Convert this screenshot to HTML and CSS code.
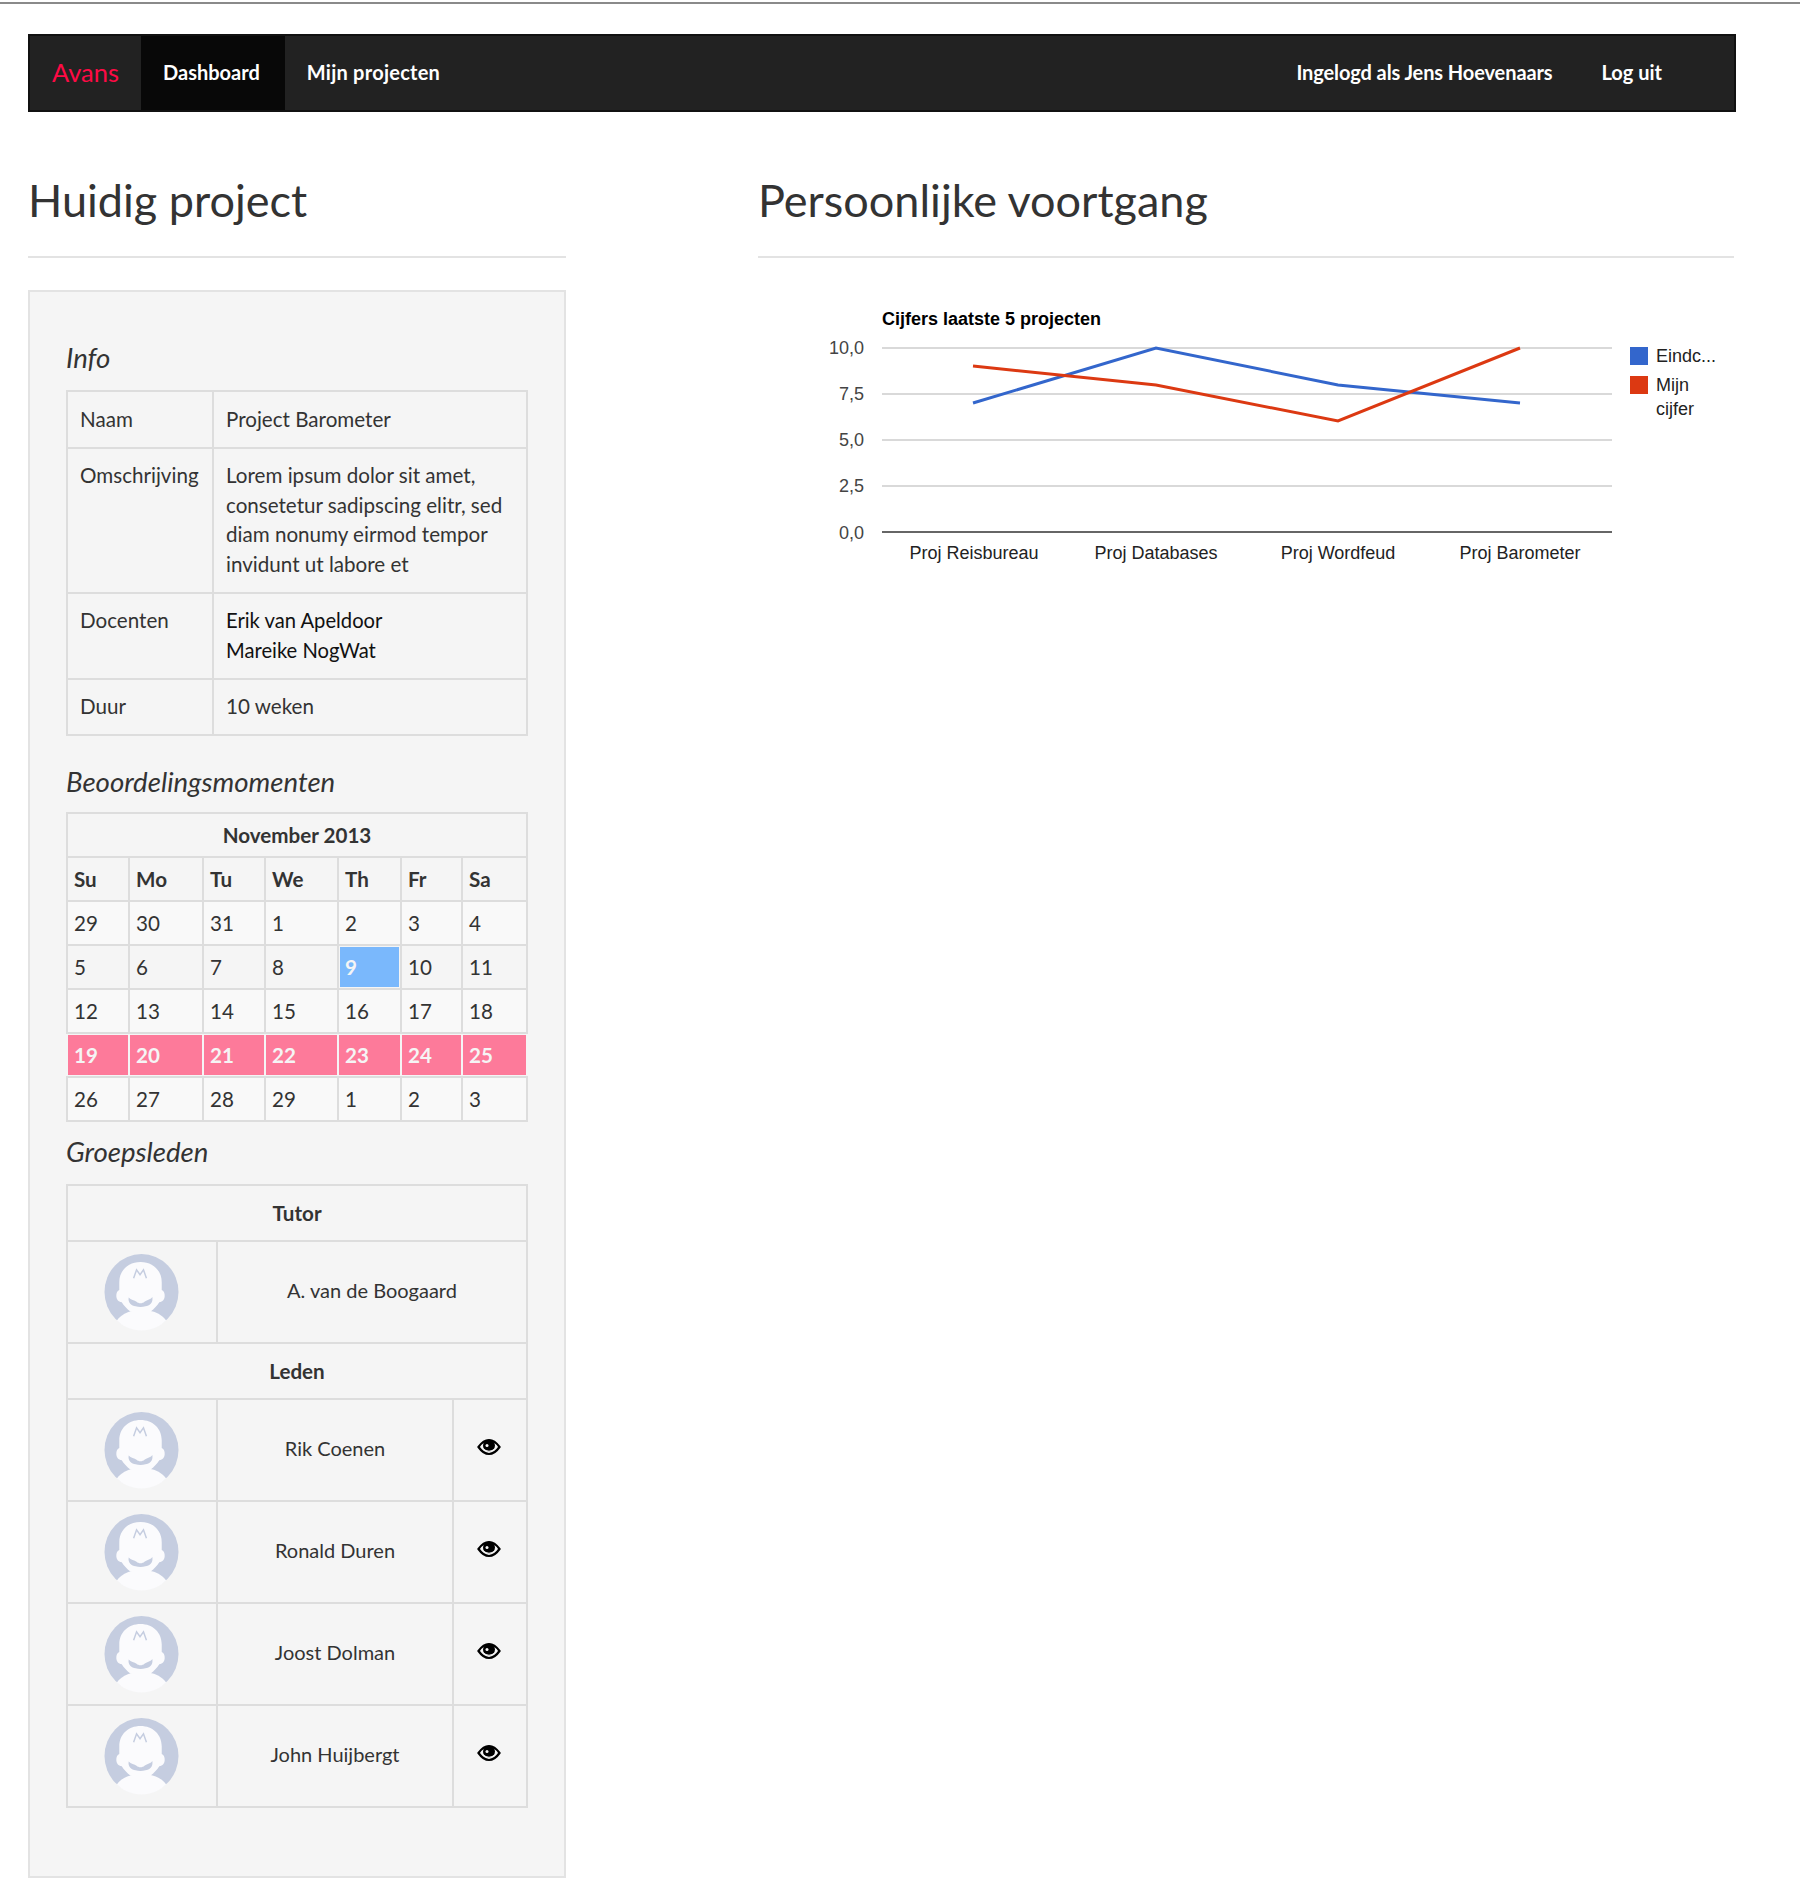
FILE: index.html
```html
<!DOCTYPE html>
<html lang="nl">
<head>
  <meta charset="UTF-8" />
  <title>Dashboard - Avans</title>
  <link rel="stylesheet" href="styles.css">
</head>
<body>
  <svg class="sprites" width="0" height="0">
    <symbol id="avatar" viewBox="0 0 76 78">
      <ellipse cx="38" cy="39" rx="37.500" ry="38.500" fill="#c5cde0"/>
      <path fill="#fbfbfd" d="M13 68C17 62 24 59 30 58H46C52 59 59 62 63 68C57 74 48 78 38 78C28 78 19 74 13 68Z"/>
      <path fill="#fbfbfd" d="M37 8.500C24.500 8.500 15.500 17 15.500 29V37C13 38 12.500 40.500 12.500 43C12.500 46 14.500 49 18 49.500C20 53 23 56 27 59H47C51 56 54 53 56 49.500C59.500 49 61.500 46 61.500 43C61.500 40.500 61 38 58.500 37V29C58.500 17 49.500 8.500 37 8.500Z"/>
      <path fill="#c5cde0" d="M25 44.500C27 47 31 47 33 49C35 51 39 51 41 49C43 47 47 47 49 44C50 50 46 53 42 53.500C39 54.500 35 54.500 32 53.500C28 53 24 50 25 44.500Z"/>
      <path fill="none" stroke="#c5cde0" stroke-width="1.500" d="M30 25L33 16.500L36.500 21.500L40 16.500L43 25"/>
    </symbol>
    <symbol id="eye" viewBox="0 0 24 18">
      <path fill="none" stroke="#000" stroke-width="2.200" d="M1.500 9C5 4 8.500 2 12 2s7 2 10.500 7C19 14 15.500 16 12 16S5 14 1.500 9z"/>
      <circle cx="12" cy="7.500" r="6" fill="#000"/>
      <circle cx="10" cy="7.500" r="1.500" fill="#f5f5f5"/>
      <path fill="none" stroke="#f5f5f5" stroke-width="1.200" d="M6 11c3 3 9 3 12 0"/>
    </symbol>
  </svg>

  <div class="page">
    <nav class="navbar">
      <a class="brand" href="#">Avans</a>
      <a class="nav-link active" href="#">Dashboard</a>
      <a class="nav-link nav-projects" href="#">Mijn projecten</a>
      <span class="nav-user">Ingelogd als Jens Hoevenaars</span>
      <a class="nav-link nav-logout" href="#">Log uit</a>
    </nav>

    <div class="columns">
      <section class="col-left">
        <h1 class="page-title">Huidig project</h1>
        <div class="well">
          <h2 class="sub-title">Info</h2>
          <table class="grid info-table">
            <tr><td class="info-key">Naam</td><td>Project Barometer</td></tr>
            <tr><td class="info-key">Omschrijving</td><td>Lorem ipsum dolor sit amet, consetetur sadipscing elitr, sed diam nonumy eirmod tempor invidunt ut labore et</td></tr>
            <tr><td class="info-key">Docenten</td><td class="names">Erik van Apeldoor<br>Mareike NogWat</td></tr>
            <tr><td class="info-key">Duur</td><td>10 weken</td></tr>
          </table>

          <h2 class="sub-title sub-title-cal">Beoordelingsmomenten</h2>
          <table class="grid calendar">
            <colgroup><col class="c1"><col class="c2"><col class="c3"><col class="c4"><col class="c5"><col class="c6"><col class="c7"></colgroup>
            <tr><th colspan="7" class="month">November 2013</th></tr>
            <tr><th>Su</th><th>Mo</th><th>Tu</th><th>We</th><th>Th</th><th>Fr</th><th>Sa</th></tr>
            <tr class="striped"><td>29</td><td>30</td><td>31</td><td>1</td><td>2</td><td>3</td><td>4</td></tr>
            <tr><td>5</td><td>6</td><td>7</td><td>8</td><td class="today">9</td><td>10</td><td>11</td></tr>
            <tr class="striped"><td>12</td><td>13</td><td>14</td><td>15</td><td>16</td><td>17</td><td>18</td></tr>
            <tr class="deadline"><td>19</td><td>20</td><td>21</td><td>22</td><td>23</td><td>24</td><td>25</td></tr>
            <tr class="striped"><td>26</td><td>27</td><td>28</td><td>29</td><td>1</td><td>2</td><td>3</td></tr>
          </table>

          <h2 class="sub-title sub-title-group">Groepsleden</h2>
          <table class="grid members">
            <colgroup><col class="m-avatar"><col class="m-name"><col class="m-eye"></colgroup>
            <tr><th colspan="3">Tutor</th></tr>
            <tr>
              <td class="avatar-cell"><svg class="avatar"><use href="#avatar"/></svg></td>
              <td colspan="2">A. van de Boogaard</td>
            </tr>
            <tr><th colspan="3">Leden</th></tr>
            <tr>
              <td class="avatar-cell"><svg class="avatar"><use href="#avatar"/></svg></td>
              <td>Rik Coenen</td>
              <td class="eye-cell"><svg class="eye"><use href="#eye"/></svg></td>
            </tr>
            <tr>
              <td class="avatar-cell"><svg class="avatar"><use href="#avatar"/></svg></td>
              <td>Ronald Duren</td>
              <td class="eye-cell"><svg class="eye"><use href="#eye"/></svg></td>
            </tr>
            <tr>
              <td class="avatar-cell"><svg class="avatar"><use href="#avatar"/></svg></td>
              <td>Joost Dolman</td>
              <td class="eye-cell"><svg class="eye"><use href="#eye"/></svg></td>
            </tr>
            <tr>
              <td class="avatar-cell"><svg class="avatar"><use href="#avatar"/></svg></td>
              <td>John Huijbergt</td>
              <td class="eye-cell"><svg class="eye"><use href="#eye"/></svg></td>
            </tr>
          </table>
        </div>
      </section>

      <section class="col-right">
        <h1 class="page-title">Persoonlijke voortgang</h1>
        <svg class="chart" viewBox="0 0 976 290" width="976" height="290">
          <text class="chart-title" x="125" y="37">Cijfers laatste 5 projecten</text>

          <g class="chart-grid">
            <line x1="125" x2="855" y1="60" y2="60"/>
            <line x1="125" x2="855" y1="106" y2="106"/>
            <line x1="125" x2="855" y1="152" y2="152"/>
            <line x1="125" x2="855" y1="198" y2="198"/>
          </g>
          <line class="chart-axis" x1="125" x2="855" y1="244" y2="244"/>

          <g class="chart-label chart-y">
            <text x="107" y="66">10,0</text>
            <text x="107" y="112">7,5</text>
            <text x="107" y="158">5,0</text>
            <text x="107" y="204">2,5</text>
            <text x="107" y="251">0,0</text>
          </g>
          <g class="chart-label chart-x">
            <text x="217" y="271">Proj Reisbureau</text>
            <text x="399" y="271">Proj Databases</text>
            <text x="581" y="271">Proj Wordfeud</text>
            <text x="763" y="271">Proj Barometer</text>
          </g>

          <polyline class="line-blue" points="216,115 399,60 581,97 763,115"/>
          <polyline class="line-red" points="216,78 399,97 581,133 763,60"/>

          <rect x="873" y="59" width="18" height="18" fill="#3366cc"/>
          <rect x="873" y="88" width="18" height="18" fill="#dc3912"/>
          <g class="chart-label">
            <text x="899" y="74">Eindc...</text>
            <text x="899" y="103">Mijn</text>
            <text x="899" y="127">cijfer</text>
          </g>
        </svg>
      </section>
    </div>
  </div>
</body>
</html>
```

FILE: styles.css
```css
body {
  margin: 0;
  border-top: 2px solid #8a8a8a;
  margin-top: 2px;
  background: #fff;
  color: #333;
  font-family: "Lato", "Open Sans", sans-serif;
  font-size: 20.600px;
}

.sprites {
  display: block;
  height: 0;
}

.page {
  width: 1708px;
  padding: 30px 0 0 28px;
}

/* navbar */
.navbar {
  display: flex;
  align-items: stretch;
  height: 74px;
  border: 2px solid #111;
  background: #222;
  font-size: 20px;
  font-weight: 700;
}

.navbar a, .nav-user {
  display: flex;
  align-items: center;
  padding-bottom: 2px;
  color: #fff;
  text-decoration: none;
}

.navbar .brand {
  padding: 0 22px 2px;
  color: #ff0a45;
  font-size: 25.500px;
  font-weight: 400;
}

.nav-link {
  padding: 0 22px;
}

.nav-link.active {
  padding-right: 25px;
  background: #080808;
}

.nav-projects {
  letter-spacing: 0.250px;
}

.nav-user {
  margin-left: auto;
  padding-right: 27px;
  letter-spacing: -0.100px;
}

.nav-logout {
  margin-right: 50px;
}

/* columns */
.columns {
  display: grid;
  grid-template-columns: 538px 976px;
  column-gap: 192px;
}

.page-title {
  margin: 0;
  padding: 60px 0 28px;
  border-bottom: 2px solid #e3e3e3;
  font-size: 45px;
  font-weight: 400;
  line-height: 56px;
}

.well {
  margin-top: 32px;
  padding: 31px 36px 68px;
  border: 2px solid #e3e3e3;
  background: #f5f5f5;
}

.sub-title {
  margin: 0;
  padding: 17px 0 14px;
  font-size: 27.600px;
  font-weight: 400;
  font-style: italic;
  line-height: 36px;
}

.sub-title-cal {
  padding-bottom: 12px;
}

.sub-title-group {
  padding-top: 12px;
  padding-bottom: 14px;
}

/* tables */
.grid {
  width: 462px;
  table-layout: fixed;
  border-collapse: collapse;
  border: 2px solid #ddd;
}

.grid td, .grid th {
  border: 2px solid #ddd;
}

.info-table {
  margin-bottom: 11px;
}

.info-table td {
  padding: 12.500px 12px;
  line-height: 29.500px;
  vertical-align: top;
}

.info-key {
  width: 120px;
}

.names {
  color: #111;
  font-size: 20.200px;
}

.calendar th, .calendar td {
  height: 42px;
  padding: 0 6px;
  text-align: left;
}

.calendar .month {
  text-align: center;
}

.c1 { width: 62px; }
.c2 { width: 74px; }
.c3 { width: 62px; }
.c4 { width: 73px; }
.c5 { width: 63px; }
.c6 { width: 61px; }
.c7 { width: 65px; }

.striped td {
  background: #f9f9f9;
}

.calendar .today {
  background: #7ab8fc;
  color: #f5f5f5;
  font-weight: 700;
  box-shadow: inset 0 0 0 1px #f5f5f5;
}

.deadline td {
  border-left-color: #f5f5f5;
  border-right-color: #f5f5f5;
  background: #fd7a9a;
  color: #f5f5f5;
  font-weight: 700;
  box-shadow: inset 0 1px 0 #f5f5f5, inset 0 -1px 0 #f5f5f5;
}

.members th {
  height: 54px;
  padding: 0;
  text-align: center;
}

.members td {
  height: 102px;
  padding: 0 0 4px;
  font-size: 20px;
  text-align: center;
  box-sizing: border-box;
}

.members .avatar-cell {
  padding: 0 2px 1px 0;
}

.members .eye-cell {
  padding: 0 2px 2px 0;
}

.m-avatar { width: 150px; }
.m-name { width: 236px; }
.m-eye { width: 74px; }

.avatar {
  display: block;
  width: 75px;
  height: 78px;
  margin: 0 auto;
}

.eye {
  display: block;
  width: 24px;
  height: 18px;
  margin: -4px auto 0;
}

/* chart */
.chart {
  display: block;
  margin: 30px 0 0 -1px;
  overflow: visible;
}

.chart text {
  font-family: "Liberation Sans", Arial, sans-serif;
  font-size: 18px;
  fill: #222;
}

.chart .chart-title {
  font-weight: 700;
  fill: #000;
}

.chart-grid line {
  stroke: #ccc;
  stroke-width: 1.500;
}

.chart-axis {
  stroke: #333;
  stroke-width: 1.500;
}

.chart-y text {
  text-anchor: end;
  fill: #444;
}

.chart-x text {
  text-anchor: middle;
}

.line-blue, .line-red {
  fill: none;
  stroke-width: 3;
}

.line-blue {
  stroke: #3366cc;
}

.line-red {
  stroke: #dc3912;
}
```
